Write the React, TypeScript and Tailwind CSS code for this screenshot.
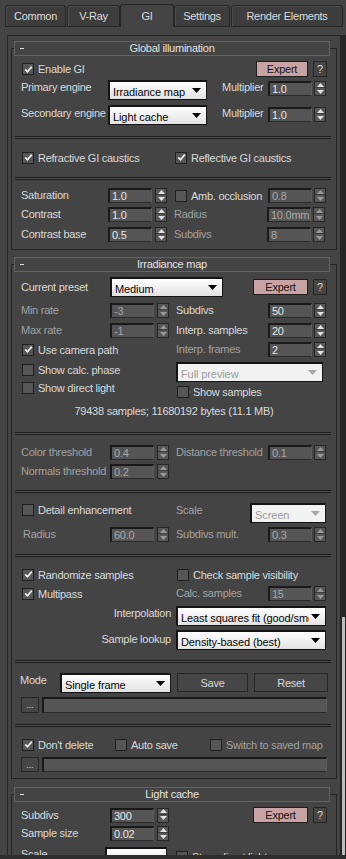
import React from "react";

const T = "text-[#dadada]";
const D = "text-[#a2a2a2]";

function Box({ checked }: { checked?: boolean }) {
  return (
    <span className="w-[12px] h-[12px] shrink-0 border border-[#202020] bg-[#565656] flex items-center justify-center">
      {checked ? (
        <svg width="9" height="9" viewBox="0 0 9 9">
          <path d="M1.2 4.4L3.5 6.8L7.8 1.6" fill="none" stroke="#ededed" strokeWidth="1.7" />
        </svg>
      ) : null}
    </span>
  );
}

function Check({ label, checked, dim, className = "" }: { label: string; checked?: boolean; dim?: boolean; className?: string }) {
  return (
    <div className={`flex items-center gap-[4px] h-[14px] ${className}`}>
      <Box checked={checked} />
      <span className={`${dim ? D : T} leading-[14px] whitespace-nowrap`}>{label}</span>
    </div>
  );
}

function Spinner({ dim }: { dim?: boolean }) {
  const c = dim ? "#9a9a9a" : "#e2e2e2";
  return (
    <div className="w-[12px] h-[15px] shrink-0 border border-[#262626] bg-[#575757] flex flex-col">
      <div className="h-[6px] flex items-center justify-center border-b border-[#3c3c3c]">
        <svg width="7" height="4" viewBox="0 0 7 4">
          <path d="M0 4L3.5 0L7 4Z" fill={c} />
        </svg>
      </div>
      <div className="flex-1 flex items-center justify-center">
        <svg width="7" height="4" viewBox="0 0 7 4">
          <path d="M0 0L7 0L3.5 4Z" fill={c} />
        </svg>
      </div>
    </div>
  );
}

function Field({ value, dim, className = "w-[44px]" }: { value: string; dim?: boolean; className?: string }) {
  return (
    <div
      className={`h-[15px] shrink-0 border-t-2 border-l-2 border-b border-r border-t-[#1a1a1a] border-l-[#1a1a1a] border-b-[#2a2a2a] border-r-[#5e5e5e] bg-[#555555] pl-[2px] leading-[12px] whitespace-nowrap overflow-hidden ${dim ? "text-[#a8a8a8]" : "text-[#e6e6e6]"} ${className}`}
    >
      {value}
    </div>
  );
}

function SpinL({ value, dim }: { value: string; dim?: boolean }) {
  return (
    <div className="flex items-center gap-[3px]">
      <Field value={value} dim={dim} />
      <Spinner dim={dim} />
    </div>
  );
}

function SpinR({ value, dim }: { value: string; dim?: boolean }) {
  return (
    <div className="flex items-center gap-[2px]">
      <Field value={value} dim={dim} />
      <Spinner dim={dim} />
    </div>
  );
}

function Drop({ text, className = "", disabled }: { text: string; className?: string; disabled?: boolean }) {
  return (
    <div
      className={`h-[20px] shrink-0 border-t-2 border-l-2 border-b border-r border-[#141414] flex items-center pl-[3px] pr-[5px] tracking-[-0.1px] ${disabled ? "bg-[#f2f2f2]" : "bg-gradient-to-b from-[#ffffff] to-[#e2e2e2]"} ${className}`}
    >
      <span className={`flex-1 overflow-hidden whitespace-nowrap leading-[14px] pt-[2px] ${disabled ? "text-[#9c9c9c]" : "text-[#050505]"}`}>{text}</span>
      <svg width="9" height="5" viewBox="0 0 9 5" className="shrink-0 ml-[2px]">
        <path d="M0 0H9L4.5 5Z" fill={disabled ? "#a8a8a8" : "#000"} />
      </svg>
    </div>
  );
}

function Expert({ className = "w-[55px]" }: { className?: string }) {
  return (
    <div className="flex items-center gap-[5px] ml-auto">
      <div className={`h-[16px] border border-[#1e1e1e] bg-[#c9a3a4] text-[#151515] flex items-center justify-center leading-[14px] ${className}`}>
        Expert
      </div>
      <div className="w-[14px] h-[16px] border border-[#262626] bg-[#454545] text-[#dadada] flex items-center justify-center leading-[14px]">
        ?
      </div>
    </div>
  );
}

function Btn({ children, className = "" }: { children: React.ReactNode; className?: string }) {
  return (
    <div className={`border border-[#262626] bg-[#464646] text-[#dadada] flex items-center justify-center leading-[14px] ${className}`}>
      {children}
    </div>
  );
}

function Sep({ className = "" }: { className?: string }) {
  return <div className={`ml-[3px] w-[316px] h-[3px] border-y border-[#1f1f1f] bg-[#4c4c4c] ${className}`} />;
}

function Header({ title }: { title: string }) {
  return (
    <div className="-mt-[8px] ml-[2px] w-[316px] h-[15px] border border-[#636363] bg-[#444444] relative flex items-center justify-center">
      <span className="absolute left-[5px] top-[6px] w-[4px] h-[1px] bg-[#e0e0e0]" />
      <span className="text-[#e2e2e2] leading-[13px]">{title}</span>
    </div>
  );
}

function Frame({ children, className = "" }: { children: React.ReactNode; className?: string }) {
  return <div className={`w-[326px] border border-[#242424] flex flex-col ${className}`}>{children}</div>;
}

function Tab({ label, className = "", active }: { label: string; className?: string; active?: boolean }) {
  return (
    <div
      className={`shrink-0 rounded-t-[3px] border border-[#252525] flex items-center justify-center text-[#dcdcdc] leading-[14px] ${
        active ? "h-[23px] bg-[#444444] border-b-0 -mx-[1px] relative z-10" : "h-[22px] bg-[#3d3d3d] shadow-[inset_1px_1px_0_#4e4e4e]"
      } ${className}`}
    >
      <span className={active ? "pb-[1px]" : ""}>{label}</span>
    </div>
  );
}

export default function App() {
  return (
    <div className="w-[346px] h-[859px] overflow-hidden bg-[#444444] font-['Liberation_Sans',Arial,sans-serif] text-[11px] tracking-[-0.25px] relative">
      {/* tabs */}
      <div className="h-[27px] flex items-end pl-[5px] gap-[1px]">
        <Tab label="Common" className="w-[61px]" />
        <Tab label="V-Ray" className="w-[53px]" />
        <Tab label="GI" className="w-[54px]" active />
        <Tab label="Settings" className="w-[56px]" />
        <Tab label="Render Elements" className="w-[112px]" />
      </div>

      <div className="flex mt-[8px] h-[820px]">
        {/* panel */}
        <div className="ml-[7px] w-[334px] h-[820px] border-l border-t border-r border-[#262626] overflow-hidden">
          <div className="pl-[3px] pt-[12px] flex flex-col">
            {/* Global illumination */}
            <Frame>
              <Header title="Global illumination" />
              <div className="mt-[5px] h-[16px] flex items-center pl-[10px] pr-[9px]">
                <Check label="Enable GI" checked />
                <Expert className="w-[52px]" />
              </div>
              <div className="mt-[3px] h-[20px] flex pl-[9px]">
                <span className={`w-[87px] self-start leading-[14px] ${T}`}>Primary engine</span>
                <Drop text="Irradiance map" className="w-[99px]" />
                <span className={`ml-[15px] w-[46px] self-start leading-[14px] ${T}`}>Multiplier</span>
                <div className="self-start mt-[1px]">
                  <SpinR value="1.0" />
                </div>
              </div>
              <div className="mt-[5px] h-[20px] flex pl-[9px]">
                <span className={`w-[87px] self-start leading-[14px] mt-[1px] whitespace-nowrap ${T}`}>Secondary engine</span>
                <Drop text="Light cache" className="w-[99px]" />
                <span className={`ml-[15px] w-[46px] self-start leading-[14px] mt-[1px] ${T}`}>Multiplier</span>
                <div className="self-start mt-[2px]">
                  <SpinR value="1.0" />
                </div>
              </div>
              <Sep className="mt-[11px]" />
              <div className="mt-[11px] h-[15px] flex items-center pl-[10px]">
                <div className="w-[153px]">
                  <Check label="Refractive GI caustics" checked />
                </div>
                <Check label="Reflective GI caustics" checked />
              </div>
              <Sep className="mt-[12px]" />
              <div className="mt-[8px] h-[15px] flex items-center pl-[9px]">
                <div className="w-[154px] flex items-center">
                  <span className={`w-[87px] ${T}`}>Saturation</span>
                  <SpinL value="1.0" />
                </div>
                <div className="w-[93px]">
                  <Check label="Amb. occlusion" />
                </div>
                <SpinR value="0.8" dim />
              </div>
              <div className="mt-[4px] h-[15px] flex items-center pl-[9px]">
                <div className="w-[154px] flex items-center">
                  <span className={`w-[87px] ${T}`}>Contrast</span>
                  <SpinL value="1.0" />
                </div>
                <span className={`w-[93px] -ml-[1px] pr-[1px] ${D}`}>Radius</span>
                <SpinR value="10.0mm" dim />
              </div>
              <div className="mt-[5px] h-[15px] flex items-center pl-[9px]">
                <div className="w-[154px] flex items-center">
                  <span className={`w-[87px] ${T}`}>Contrast base</span>
                  <SpinL value="0.5" />
                </div>
                <span className={`w-[93px] -ml-[1px] pr-[1px] ${D}`}>Subdivs</span>
                <SpinR value="8" dim />
              </div>
              <div className="h-[7px]" />
            </Frame>

            {/* Irradiance map */}
            <Frame className="mt-[14px]">
              <Header title="Irradiance map" />
              <div className="mt-[5px] h-[20px] flex items-center pl-[9px] pr-[9px]">
                <span className={`w-[89px] self-start leading-[14px] mt-[3px] ${T}`}>Current preset</span>
                <Drop text="Medium" className="w-[113px]" />
                <Expert />
              </div>
              <div className="mt-[6px] h-[15px] flex items-center pl-[9px]">
                <div className="w-[154px] flex items-center">
                  <span className={`w-[89px] ${D}`}>Min rate</span>
                  <SpinL value="-3" dim />
                </div>
                <span className={`w-[93px] pl-[1px] ${T}`}>Subdivs</span>
                <SpinR value="50" />
              </div>
              <div className="mt-[5px] h-[15px] flex items-center pl-[9px]">
                <div className="w-[154px] flex items-center">
                  <span className={`w-[89px] ${D}`}>Max rate</span>
                  <SpinL value="-1" dim />
                </div>
                <span className={`w-[93px] pl-[1px] ${T}`}>Interp. samples</span>
                <SpinR value="20" />
              </div>
              <div className="mt-[4px] h-[15px] flex items-center pl-[9px]">
                <div className="w-[154px] flex items-center pl-[1px]">
                  <Check label="Use camera path" checked />
                </div>
                <span className={`w-[93px] pl-[1px] ${D}`}>Interp. frames</span>
                <SpinR value="2" />
              </div>
              <div className="mt-[5px] h-[19px] flex pl-[9px]">
                <div className="w-[154px] flex items-start pl-[1px] pt-[1px]">
                  <Check label="Show calc. phase" />
                </div>
                <Drop text="Full preview" className="w-[147px] ml-[1px]" disabled />
              </div>
              <div className="h-[18px] flex pl-[9px]">
                <div className="w-[154px] flex items-start pl-[1px] pt-[0px]">
                  <Check label="Show direct light" />
                </div>
                <div className="self-end pl-[2px]">
                  <Check label="Show samples" />
                </div>
              </div>
              <div className={`mt-[6px] h-[12px] leading-[12px] text-center ${T}`}>79438 samples; 11680192 bytes (11.1 MB)</div>
              <Sep className="mt-[15px]" />
              <div className="mt-[10px] h-[15px] flex items-center pl-[9px]">
                <div className="w-[154px] flex items-center">
                  <span className={`w-[89px] ${D}`}>Color threshold</span>
                  <SpinL value="0.4" dim />
                </div>
                <span className={`w-[93px] pl-[1px] whitespace-nowrap ${D}`}>Distance threshold</span>
                <SpinR value="0.1" dim />
              </div>
              <div className="mt-[4px] h-[15px] flex items-center pl-[9px]">
                <div className="w-[154px] flex items-center">
                  <span className={`w-[89px] whitespace-nowrap ${D}`}>Normals threshold</span>
                  <SpinL value="0.2" dim />
                </div>
              </div>
              <Sep className="mt-[11px]" />
              <div className="mt-[10px] h-[20px] flex pl-[9px]">
                <div className="w-[154px] flex items-start pl-[1px] pt-[0px]">
                  <Check label="Detail enhancement" />
                </div>
                <span className={`w-[75px] pl-[1px] leading-[14px] ${D}`}>Scale</span>
                <Drop text="Screen" className="w-[76px]" disabled />
              </div>
              <div className="mt-[4px] h-[15px] flex items-center pl-[9px]">
                <div className="w-[154px] flex items-center">
                  <span className={`w-[89px] pl-[2px] ${D}`}>Radius</span>
                  <SpinL value="60.0" dim />
                </div>
                <span className={`w-[93px] pl-[1px] ${D}`}>Subdivs mult.</span>
                <SpinR value="0.3" dim />
              </div>
              <Sep className="mt-[12px]" />
              <div className="mt-[10px] h-[15px] flex items-center pl-[9px]">
                <div className="w-[154px] flex items-center pl-[1px]">
                  <Check label="Randomize samples" checked />
                </div>
                <div className="pl-[2px]">
                  <Check label="Check sample visibility" />
                </div>
              </div>
              <div className="mt-[4px] h-[15px] flex items-center pl-[9px]">
                <div className="w-[154px] flex items-center pl-[1px]">
                  <Check label="Multipass" checked />
                </div>
                <span className={`w-[93px] pl-[1px] ${D}`}>Calc. samples</span>
                <SpinR value="15" dim />
              </div>
              <div className="mt-[5px] h-[20px] flex pl-[9px]">
                <span className={`w-[155px] pr-[5px] text-right leading-[14px] ${T}`}>Interpolation</span>
                <Drop text="Least squares fit (good/smooth)" className="w-[150px]" />
              </div>
              <div className="mt-[4px] h-[20px] flex pl-[9px]">
                <span className={`w-[155px] pr-[5px] text-right leading-[14px] mt-[2px] ${T}`}>Sample lookup</span>
                <Drop text="Density-based (best)" className="w-[150px]" />
              </div>
              <Sep className="mt-[10px]" />
              <div className="mt-[10px] h-[20px] flex pl-[8px]">
                <span className={`w-[40px] leading-[14px] ${T}`}>Mode</span>
                <Drop text="Single frame" className="w-[111px]" />
                <Btn className="ml-[6px] w-[71px] h-[19px]">Save</Btn>
                <Btn className="ml-[6px] w-[74px] h-[19px]">Reset</Btn>
              </div>
              <div className="mt-[4px] h-[16px] flex items-center pl-[9px] gap-[3px]">
                <Btn className="w-[18px] h-[16px] text-[9px]">...</Btn>
                <Field value="" className="w-[285px] h-[16px]" />
              </div>
              <Sep className="mt-[11px]" />
              <div className="mt-[10px] h-[15px] flex items-center pl-[10px]">
                <div className="w-[93px]">
                  <Check label="Don't delete" checked />
                </div>
                <div className="w-[95px]">
                  <Check label="Auto save" />
                </div>
                <Check label="Switch to saved map" dim />
              </div>
              <div className="mt-[5px] h-[15px] flex items-center pl-[9px] gap-[3px]">
                <Btn className="w-[18px] h-[15px] text-[9px]">...</Btn>
                <Field value="" className="w-[285px] h-[15px]" />
              </div>
              <div className="h-[6px]" />
            </Frame>

            {/* Light cache */}
            <Frame className="mt-[15px]">
              <Header title="Light cache" />
              <div className="mt-[5px] h-[16px] flex items-center pl-[9px] pr-[9px]">
                <span className={`w-[89px] ${T}`}>Subdivs</span>
                <SpinL value="300" />
                <Expert />
              </div>
              <div className="mt-[3px] h-[15px] flex items-center pl-[9px]">
                <span className={`w-[89px] ${T}`}>Sample size</span>
                <SpinL value="0.02" />
              </div>
              <div className="mt-[6px] h-[20px] flex pl-[9px]">
                <span className={`w-[84px] leading-[14px] ${T}`}>Scale</span>
                <Drop text="Screen" className="w-[62px]" />
                <div className="ml-[9px] mt-[3px]">
                  <Check label="Store direct light" />
                </div>
              </div>
              <div className="h-[40px]" />
            </Frame>
          </div>
        </div>
        {/* scrollbar */}
        <div className="w-[5px] h-[820px] bg-[#262626] flex flex-col">
          <div className="h-[582px]" />
          <div className="flex-1 mx-[1px] bg-[#bdbdbd]" />
        </div>
      </div>
      <div className="h-[4px] bg-[#2e2e2e]" />
    </div>
  );
}
